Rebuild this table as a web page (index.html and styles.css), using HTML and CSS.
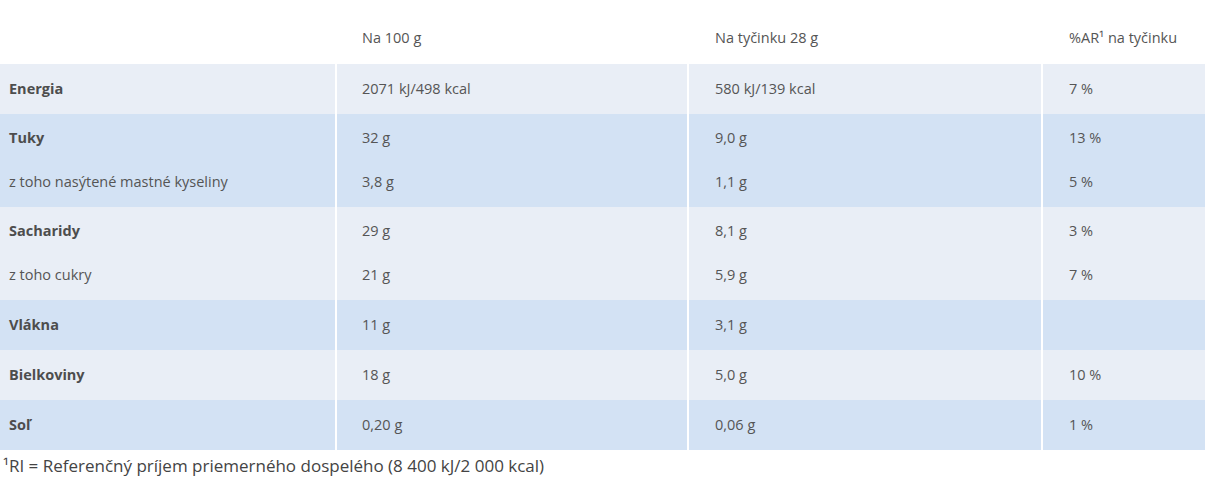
FILE: index.html
```html
<!DOCTYPE html>
<html lang="sk">
<head>
<meta charset="utf-8">
<title>Nutričné hodnoty</title>
<link rel="stylesheet" href="styles.css">
</head>
<body>
<table class="nutri">
  <thead>
    <tr class="head">
      <th class="c1"></th>
      <th class="c2">Na 100 g</th>
      <th class="c3">Na tyčinku 28 g</th>
      <th class="c4">%AR¹ na tyčinku</th>
    </tr>
  </thead>
  <tbody class="light single">
    <tr><th class="c1">Energia</th><td class="c2">2071 kJ/498 kcal</td><td class="c3">580 kJ/139 kcal</td><td class="c4">7 %</td></tr>
  </tbody>
  <tbody class="blue group">
    <tr class="first"><th class="c1">Tuky</th><td class="c2">32 g</td><td class="c3">9,0 g</td><td class="c4">13 %</td></tr>
    <tr class="last"><td class="c1 sub">z toho nasýtené mastné kyseliny</td><td class="c2">3,8 g</td><td class="c3">1,1 g</td><td class="c4">5 %</td></tr>
  </tbody>
  <tbody class="light group">
    <tr class="first"><th class="c1">Sacharidy</th><td class="c2">29 g</td><td class="c3">8,1 g</td><td class="c4">3 %</td></tr>
    <tr class="last"><td class="c1 sub">z toho cukry</td><td class="c2">21 g</td><td class="c3">5,9 g</td><td class="c4">7 %</td></tr>
  </tbody>
  <tbody class="blue single">
    <tr><th class="c1">Vlákna</th><td class="c2">11 g</td><td class="c3">3,1 g</td><td class="c4"></td></tr>
  </tbody>
  <tbody class="light single">
    <tr><th class="c1">Bielkoviny</th><td class="c2">18 g</td><td class="c3">5,0 g</td><td class="c4">10 %</td></tr>
  </tbody>
  <tbody class="blue single">
    <tr><th class="c1">Soľ</th><td class="c2">0,20 g</td><td class="c3">0,06 g</td><td class="c4">1 %</td></tr>
  </tbody>
</table>
<p class="footnote">¹RI = Referenčný príjem priemerného dospelého (8 400 kJ/2 000 kcal)</p>
</body>
</html>
```

FILE: styles.css
```css
html, body {
  margin: 0;
  padding: 0;
  background: #ffffff;
}

body {
  font-family: "Open Sans", "Noto Sans", "Liberation Sans", sans-serif;
  color: #555555;
}

.nutri {
  width: 1205px;
  border-collapse: collapse;
  table-layout: fixed;
  font-size: 14.5px;
  line-height: 20px;
}

.nutri th,
.nutri td {
  text-align: left;
  vertical-align: middle;
  padding: 15px 0;
  white-space: nowrap;
}

.nutri th {
  font-weight: 700;
  color: #4d4d4d;
}

.nutri .head th {
  font-weight: 400;
  color: #555555;
  padding: 28px 0 16px;
  background: #ffffff;
}

.c1 { width: 326px; padding-left: 9px !important; }
.c2 { width: 325px; padding-left: 25px !important; }
.c3 { width: 326px; padding-left: 26px !important; }
.c4 { width: 137px; padding-left: 26px !important; }

.nutri tbody .c2,
.nutri tbody .c3,
.nutri tbody .c4 {
  border-left: 2px solid #ffffff;
}

.nutri .head .c2,
.nutri .head .c3,
.nutri .head .c4 {
  border-left: 2px solid #ffffff;
}

.nutri td.sub {
  font-weight: 400;
}

.light { background: #e9eef6; }
.blue { background: #d3e2f4; }

.group .first th,
.group .first td {
  padding-top: 14px;
  padding-bottom: 12px;
}

.group .last th,
.group .last td {
  padding-top: 12px;
  padding-bottom: 15px;
}

.footnote {
  margin: 0;
  padding: 4px 0 0 3px;
  font-size: 17px;
  line-height: 24px;
  color: #444444;
}
```
